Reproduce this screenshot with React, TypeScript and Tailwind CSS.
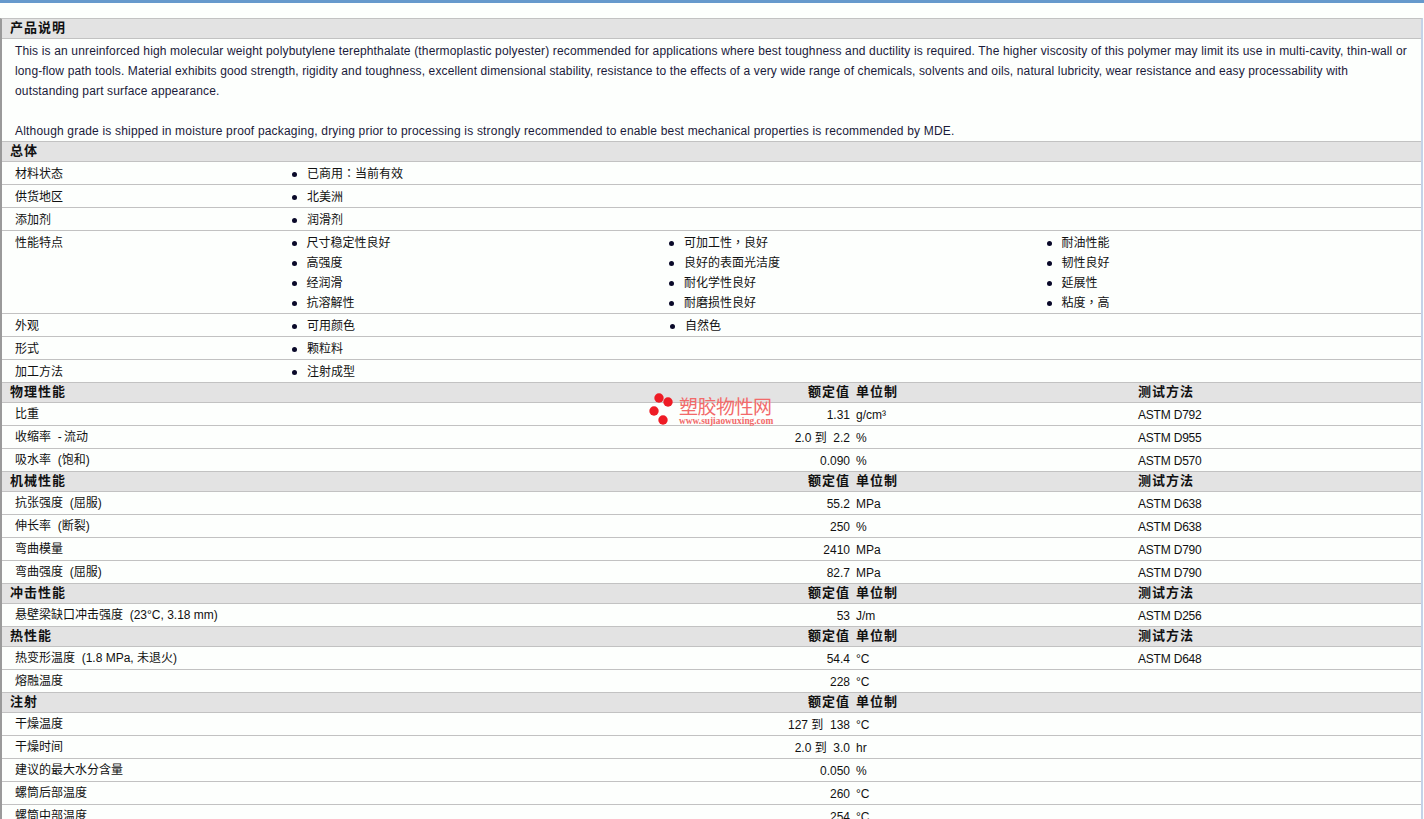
const sans = "font-['Liberation_Sans','Noto_Sans_CJK_SC',sans-serif]";

function Punct({ text }: { text: string }) {
  return (
    <>
      {text.split(/([：，])/).map((part, i) =>
        i % 2 === 1 ? (
          <span key={i} className="font-['Noto_Sans_CJK_TC',sans-serif] leading-none">
            {part}
          </span>
        ) : (
          <span key={i}>{part}</span>
        ),
      )}
    </>
  );
}

function Bullet({ text }: { text: string }) {
  return (
    <div className="flex h-5 items-center">
      <span className="ml-[3px] h-[5px] w-[5px] rounded-full bg-[#0a0a2a]" />
      <span className="ml-[10px] text-[12px] leading-[20px] text-[#111]">
        <Punct text={text} />
      </span>
    </div>
  );
}

function Section({ title, cols, method }: { title: string; cols?: boolean; method?: boolean }) {
  return (
    <div className="flex h-[20px] items-center border-b border-[#c2c2c2] bg-[#e3e3e3] pb-[2px] pl-2 text-[13px] font-bold leading-none tracking-[1px] text-[#111]">
      <span className="w-[798px]">{title}</span>
      {cols && <span className="w-[42px] text-right">额定值</span>}
      {cols && <span className="ml-[6px] w-[282px]">单位制</span>}
      {method && <span>测试方法</span>}
    </div>
  );
}

function Info({ name, cols }: { name: string; cols: string[][] }) {
  return (
    <div className="flex border-b border-[#c2c2c2] pl-[13px] pt-[2px]">
      <div className="w-[274px] text-[12px] leading-[20px] text-[#111]">{name}</div>
      {cols.map((c, i) => (
        <div key={i} className="w-[378px] first:w-[379px]">
          {c.map((t) => (
            <Bullet key={t} text={t} />
          ))}
        </div>
      ))}
    </div>
  );
}

function Data({ name, value, unit, method }: { name: string; value: string; unit: string; method?: string }) {
  return (
    <div className="flex h-[23px] items-center border-b border-[#c2c2c2] pl-[13px] text-[12px] text-[#111]">
      <span className="w-[500px]">{name}</span>
      <span className="w-[335px] translate-y-px text-right">{value}</span>
      <span className="ml-[6px] w-[282px] translate-y-px">{unit}</span>
      {method && <span className="translate-y-px tracking-[-0.2px]">{method}</span>}
    </div>
  );
}

export default function App() {
  return (
    <div className={`${sans} h-[819px] w-full overflow-hidden border-t-[3px] border-[#6699cc] bg-[#fdfffd]`}>
      <div className="relative mr-px mt-[15px] border-x-2 border-t border-l-[#9a9a9a] border-r-[#c4d2e8] border-t-[#c2c2c2]">
        <Section title="产品说明" />
        <div className="h-[103px] border-b border-[#c2c2c2] pl-[13px] pr-2 pt-[2px] text-[12px] leading-[20px] text-[#1a1a3a]">
          <span className="tracking-[0.15px]">
            This is an unreinforced high molecular weight polybutylene terephthalate (thermoplastic polyester) recommended for applications where best toughness and ductility is required. The higher viscosity of this polymer may limit its use in multi-cavity, thin-wall or
          </span>{" "}
          <span className="tracking-[0.127px]">
            long-flow path tools. Material exhibits good strength, rigidity and toughness, excellent dimensional stability, resistance to the effects of a very wide range of chemicals, solvents and oils, natural lubricity, wear resistance and easy processability with
          </span>{" "}
          <span className="tracking-[0.16px]">outstanding part surface appearance.</span>
          <br />
          <br />
          <span className="tracking-[0.184px]">
            Although grade is shipped in moisture proof packaging, drying prior to processing is strongly recommended to enable best mechanical properties is recommended by MDE.
          </span>
        </div>
        <Section title="总体" />
        <Info name="材料状态" cols={[["已商用：当前有效"]]} />
        <Info name="供货地区" cols={[["北美洲"]]} />
        <Info name="添加剂" cols={[["润滑剂"]]} />
        <Info
          name="性能特点"
          cols={[
            ["尺寸稳定性良好", "高强度", "经润滑", "抗溶解性"],
            ["可加工性，良好", "良好的表面光洁度", "耐化学性良好", "耐磨损性良好"],
            ["耐油性能", "韧性良好", "延展性", "粘度，高"],
          ]}
        />
        <Info name="外观" cols={[["可用颜色"], ["自然色"]]} />
        <Info name="形式" cols={[["颗粒料"]]} />
        <Info name="加工方法" cols={[["注射成型"]]} />
        <Section title="物理性能" cols method />
        <Data name="比重" value="1.31" unit="g/cm³" method="ASTM D792" />
        <Data name={"收缩率\u00A0 -\u2009流动"} value={"2.0 到\u00A0 2.2"} unit="%" method="ASTM D955" />
        <Data name={"吸水率\u00A0 (饱和)"} value="0.090" unit="%" method="ASTM D570" />
        <Section title="机械性能" cols method />
        <Data name={"抗张强度\u00A0 (屈服)"} value="55.2" unit="MPa" method="ASTM D638" />
        <Data name={"伸长率\u00A0 (断裂)"} value="250" unit="%" method="ASTM D638" />
        <Data name="弯曲模量" value="2410" unit="MPa" method="ASTM D790" />
        <Data name={"弯曲强度\u00A0 (屈服)"} value="82.7" unit="MPa" method="ASTM D790" />
        <Section title="冲击性能" cols method />
        <Data name={"悬壁梁缺口冲击强度\u00A0 (23°C, 3.18 mm)"} value="53" unit="J/m" method="ASTM D256" />
        <Section title="热性能" cols method />
        <Data name={"热变形温度\u00A0 (1.8 MPa, 未退火)"} value="54.4" unit="°C" method="ASTM D648" />
        <Data name="熔融温度" value="228" unit="°C" />
        <Section title="注射" cols />
        <Data name="干燥温度" value={"127 到\u00A0 138"} unit="°C" />
        <Data name="干燥时间" value={"2.0 到\u00A0 3.0"} unit="hr" />
        <Data name="建议的最大水分含量" value="0.050" unit="%" />
        <Data name="螺筒后部温度" value="260" unit="°C" />
        <Data name="螺筒中部温度" value="254" unit="°C" />

        <div className="absolute left-[647px] top-[374px] flex items-start">
          <svg width="26" height="34" viewBox="0 0 26 34">
            <circle cx="10" cy="5" r="4.7" fill="#ee1c25" />
            <circle cx="19" cy="9" r="4.7" fill="#ee1c25" />
            <circle cx="5" cy="18" r="4.7" fill="#ee1c25" />
            <circle cx="14" cy="27" r="4.7" fill="#ee1c25" />
          </svg>
          <div className="ml-[4px] mt-[5px]">
            <div className="text-[19px] leading-[19px] tracking-[-0.5px] text-[#f26a6a]">塑胶物性网</div>
            <div className="font-['Liberation_Serif',serif] text-[9.4px] font-bold leading-[9px] text-[#f26a6a]">www.sujiaowuxing.com</div>
          </div>
        </div>
      </div>
    </div>
  );
}
